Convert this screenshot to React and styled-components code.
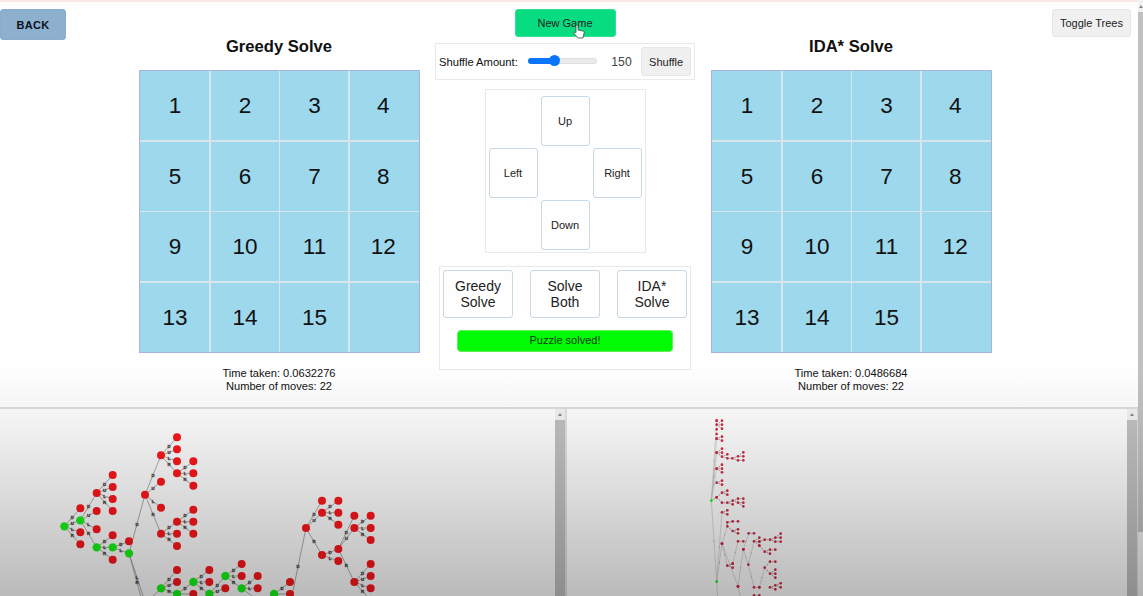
import React from "react";
import styled, { createGlobalStyle } from "styled-components";

const Global = createGlobalStyle`
  * { box-sizing: border-box; }
  body { margin: 0; background: #fff; font-family: "Liberation Sans", Arial, sans-serif; color: #111; overflow: hidden; }
  button { font-family: inherit; padding: 0; margin: 0; color: #222; }
`;

const Page = styled.div`
  position: relative;
  display: flex;
  width: 1143px;
  height: 596px;
  overflow: hidden;
  background: #fefefe;
`;
const Content = styled.div`
  width: 1138px;
  display: flex;
  flex-direction: column;
  border-top: 2px solid #fbe6e8;
`;
const Game = styled.main`
  height: 405px;
  display: grid;
  grid-template-columns: 139px 281px 291px 281px 1fr;
`;
const Side = styled.div`
  padding: 7px 7px 0 0;
  display: flex;
  align-items: flex-start;
  justify-content: ${(p) => p.$align || "flex-start"};
`;
const Button = styled.button`
  width: ${(p) => p.$w}px;
  height: ${(p) => p.$h}px;
  font-size: ${(p) => p.$size || 11}px;
  border: 1px solid ${(p) => p.$border || "#e6e6e6"};
  border-radius: 3px;
  background: ${(p) => p.$bg || "#f0f0f0"};
`;
const BackButton = styled(Button)`
  font-weight: 700;
  letter-spacing: 0.3px;
  color: #0b1220;
`;
const Outlined = styled(Button)`
  background: #fefefe;
  border-color: #c6d8e4;
  line-height: 16px;
`;

const BoardColumn = styled.section`
  display: flex;
  flex-direction: column;
  align-items: stretch;
`;
const Title = styled.h2`
  margin: 35px 1px 13px 0;
  font-size: 16.6px;
  line-height: 20px;
  text-align: center;
`;
const Board = styled.div`
  height: 283px;
  display: grid;
  grid-template-columns: 69px 68px 68px 1fr;
  grid-template-rows: repeat(4, 1fr);
  gap: 1.5px;
  border: 1px solid #a9b4dc;
  background: #d6e6ec;
`;
const Tile = styled.div`
  display: flex;
  align-items: center;
  justify-content: center;
  background: #9dd8ec;
  font-size: 22.5px;
  padding: 1px 0 0 1px;
  &:nth-child(4n) { padding-right: 3px; }
`;
const Stats = styled.div`
  margin: 14px 1px 0 0;
  font-size: 11.1px;
  line-height: 13px;
  text-align: center;
`;

const Controls = styled.section`
  display: flex;
  flex-direction: column;
  align-items: center;
  padding: 7px 1px 0 0;
`;
const ShufflePanel = styled.div`
  width: 260px;
  height: 37px;
  margin-top: 6px;
  padding: 0 3px 0 3px;
  display: flex;
  align-items: center;
  border: 1px solid #e9e9e9;
  font-size: 11.2px;
`;
const Label = styled.span`
  width: 80px;
  white-space: nowrap;
`;
const Track = styled.div`
  width: 70px;
  height: 6px;
  margin: 0 14px 2px 9px;
  border-radius: 3px;
  border: 1px solid #dedede;
  background: #ebebeb;
`;
const Fill = styled.div`
  width: 27px;
  height: 6px;
  margin: -1px;
  display: flex;
  align-items: center;
  justify-content: flex-end;
  border-radius: 3px;
  background: #0a75fb;
`;
const Knob = styled.div`
  flex: none;
  width: 11px;
  height: 11px;
  margin-right: -5px;
  border-radius: 50%;
  background: #0a75fb;
`;
const Amount = styled.span`
  width: 30px;
  font-size: 12.2px;
  color: #444;
`;
const Pad = styled.div`
  width: 161px;
  height: 164px;
  margin-top: 9px;
  padding-top: 3px;
  display: grid;
  grid-template-columns: repeat(3, 49px);
  grid-template-rows: repeat(3, 50px);
  gap: 2px 3px;
  place-content: center;
  border: 1px solid #e9e9e9;
  grid-template-areas: ". up ." "left . right" ". down .";
`;
const PadButton = styled(Outlined)`
  grid-area: ${(p) => p.$area};
`;
const SolvePanel = styled.div`
  width: 252px;
  height: 104px;
  margin-top: 13px;
  padding: 3px;
  border: 1px solid #e9e9e9;
  display: flex;
  flex-direction: column;
  align-items: center;
`;
const SolveRow = styled.div`
  width: 100%;
  display: flex;
  justify-content: space-between;
`;
const Solved = styled.div`
  width: 216px;
  height: 22px;
  margin-top: 12px;
  border-radius: 4px;
  background: #00fb04;
  border: 1px solid #5cf05c;
  font-size: 11px;
  line-height: 19px;
  text-align: center;
  color: #083a08;
`;

const Trees = styled.section`
  flex: 1;
  display: flex;
  border-top: 2px solid #dcdcdc;
`;
const TreePanel = styled.div`
  width: ${(p) => p.$w}px;
  display: flex;
  border-right: ${(p) => p.$edge}px solid #e0e0e0;
`;
const Drawing = styled.svg`
  display: block;
  flex: 1;
  min-width: 0;
  height: 187px;
`;
const Scrollbar = styled.div`
  width: ${(p) => p.$w}px;
  flex: none;
  display: flex;
  flex-direction: column;
  background: #f1f1f1;
`;
const Arrow = styled.div`
  height: 12px;
  display: flex;
  align-items: center;
  justify-content: center;
  &::after {
    content: "";
    border: 2.5px solid transparent;
    border-top: 0;
    border-bottom: 3px solid #888;
  }
`;
const Thumb = styled.div`
  height: ${(p) => p.$h};
  background: #c1c1c1;
`;
const Shade = styled.div`
  position: absolute;
  inset: 365px 0 0 0;
  pointer-events: none;
  background: linear-gradient(rgba(0, 0, 0, 0), rgba(0, 0, 0, 0.04) 22%, rgba(0, 0, 0, 0.265));
`;
const Cursor = styled.svg`
  position: absolute;
  left: 573px;
  top: 24px;
`;

// Nodes built with n() were explored, nodes built with g() lie on the solution path.
const n = (x, y, ...kids) => ({ x, y, kids });
const g = (x, y, ...kids) => ({ x, y, kids, found: true });

const greedy = g(73, 379,
  n(121, 325),
  g(121, 361,
    n(170, 279, n(218, 225), n(218, 261), n(218, 297), n(218, 333)),
    n(170, 333),
    n(170, 388),
    g(170, 442,
      n(218, 406),
      g(218, 442,
        n(267, 424),
        g(267, 460,
          n(315, 284,
            n(363, 166, n(411, 112), n(411, 148), n(411, 184), n(411, 220, n(460, 184), n(460, 220), n(460, 257))),
            n(363, 245),
            n(363, 323),
            n(363, 401, n(411, 365, n(460, 329), n(460, 365), n(460, 401)), n(411, 401), n(411, 438))
          ),
          n(315, 605),
          g(315, 634)
        )
      ),
      n(218, 479)
    )
  ),
  n(121, 397),
  n(121, 433)
);
const greedyPath = g(315, 612,
  g(363, 565,
    n(411, 510),
    n(411, 546),
    g(411, 582,
      g(460, 546, n(508, 510), n(508, 546), g(508, 582,
        g(556, 528, n(605, 492), n(605, 528), g(605, 565, n(653, 528), n(653, 565), n(653, 601))),
        n(556, 565))),
      n(460, 582)
    )
  )
);
const greedyTail = g(653, 610,
  g(702, 582, n(750, 546), n(750, 582))
);
const greedyBranch = n(750, 616,
  n(798, 384,
    n(846, 302),
    n(846, 338, n(895, 302), n(895, 338), n(895, 374)),
    n(846, 465,
      n(895, 447,
        n(943, 347),
        n(943, 384, n(992, 347), n(992, 384), n(992, 420)),
        n(943, 546, n(992, 492), n(992, 528), n(992, 565), n(992, 601))
      ),
      n(895, 483)
    )
  )
);

const ida = [
  n(80, 74, n(96, 62), n(96, 74), n(96, 86)),
  n(80, 62), n(80, 88), n(80, 102),
  n(80, 116, n(96, 110), n(96, 122)),
  n(80, 158, n(96, 146), n(96, 158), n(96, 170, n(112, 163), n(112, 175, n(127, 175, n(144, 169, n(160, 157), n(160, 169)), n(144, 181, n(160, 181)))))),
  n(80, 206, n(96, 194), n(96, 206), n(96, 217)),
  n(80, 248, n(96, 242), n(96, 254)),
  n(80, 292, n(96, 278, n(112, 272), n(112, 284)), n(96, 308, n(112, 308, n(128, 302, n(144, 296, n(160, 296)), n(144, 308, n(160, 308), n(160, 319))), n(128, 313)))),
  g(64, 302, n(80, 62), n(80, 116), n(80, 158), n(80, 206), n(80, 292), g(80, 545, n(96, 337, n(112, 331), n(112, 343)), n(96, 431, n(112, 379, n(112, 367, n(128, 364), n(144, 364)), n(128, 393, n(144, 388), n(144, 400)))), n(84, 610))),
  n(96, 431, n(112, 497, n(128, 491), n(128, 503))),
  n(96, 431, n(144, 559)),
  n(128, 491, n(144, 424, n(160, 424))),
  n(144, 559, n(160, 448)),
  n(160, 448, n(175, 494, n(192, 424, n(208, 413), n(208, 425), n(208, 437)), n(192, 562, n(208, 562)))),
  n(160, 448, n(176, 400, n(192, 400))),
  n(208, 425, n(224, 419, n(240, 419, n(256, 413, n(272, 401), n(272, 413)), n(256, 425, n(272, 425))))),
  n(208, 437, n(224, 455, n(240, 449, n(256, 449)), n(240, 461))),
  n(208, 562, n(224, 503, n(240, 485, n(256, 485)), n(240, 521, n(256, 509), n(256, 521), n(256, 533)))),
  n(240, 562, n(256, 556, n(272, 550), n(272, 562)), n(256, 568)),
  n(192, 586, n(208, 586)),
  n(144, 559, n(156, 610)),
];

const collect = (roots) => {
  const nodes = [];
  const edges = [];
  const walk = (node) => {
    nodes.push(node);
    node.kids.forEach((kid, i) => {
      const four = node.kids.length > 3;
      edges.push({ a: node, b: kid, move: (four ? "DULR" : kid.y < node.y ? "DUL" : "ULR")[i % (four ? 4 : 3)] });
      walk(kid);
    });
  };
  roots.forEach(walk);
  return { nodes, edges };
};

function Tree({ roots, r, viewBox, labels }) {
  const { nodes, edges } = collect(roots);
  return (
    <Drawing viewBox={viewBox} preserveAspectRatio="xMinYMin slice">
      {edges.map(({ a, b }, i) => (
        <line key={i} x1={a.x} y1={a.y} x2={b.x} y2={b.y} stroke={labels ? "#989898" : "#c2c2c2"} strokeWidth={labels ? 2.4 : 1.8} />
      ))}
      {edges.map(({ a, b, move }, i) => {
        const x = (a.x + b.x) / 2;
        const y = (a.y + b.y) / 2;
        if (y > 576) return null;
        return labels ? (
          <text key={i} x={x} y={y + 4.5} fontSize="13" fontWeight="700" textAnchor="middle" fill="#333" stroke="#555" strokeWidth="1">{move}</text>
        ) : (
          <circle key={i} cx={x} cy={y} r="1.8" fill="#aaa" />
        );
      })}
      {nodes.map((d, i) => (
        <circle key={i} cx={d.x} cy={d.y} r={d.found ? r * 1.04 : r} fill={d.found ? "#16f516" : labels ? "#fb171c" : "#d32a42"} />
      ))}
    </Drawing>
  );
}

function Puzzle({ title, time, moves }) {
  return (
    <BoardColumn>
      <Title>{title}</Title>
      <Board>
        {Array.from({ length: 16 }, (_, i) => (
          <Tile key={i}>{i < 15 ? i + 1 : ""}</Tile>
        ))}
      </Board>
      <Stats>
        <div>Time taken: {time}</div>
        <div>Number of moves: {moves}</div>
      </Stats>
    </BoardColumn>
  );
}

export default function App() {
  return (
    <Page>
      <Global />
      <Content>
        <Game>
          <Side>
            <BackButton $w={66} $h={31} $bg="#8eb0cf" $border="#8badcc">BACK</BackButton>
          </Side>
          <Puzzle title="Greedy Solve" time="0.0632276" moves={22} />
          <Controls>
            <Button $w={101} $h={28} $bg="#08dc80" $border="#2ce092">New Game</Button>
            <ShufflePanel>
              <Label>Shuffle Amount:</Label>
              <Track><Fill><Knob /></Fill></Track>
              <Amount>150</Amount>
              <Button $w={50} $h={29}>Shuffle</Button>
            </ShufflePanel>
            <Pad>
              <PadButton $area="up" $w={49} $h={50}>Up</PadButton>
              <PadButton $area="left" $w={49} $h={50}>Left</PadButton>
              <PadButton $area="right" $w={49} $h={50}>Right</PadButton>
              <PadButton $area="down" $w={49} $h={50}>Down</PadButton>
            </Pad>
            <SolvePanel>
              <SolveRow>
                <Outlined $w={70} $h={48} $size={14}>Greedy<br />Solve</Outlined>
                <Outlined $w={70} $h={48} $size={14}>Solve<br />Both</Outlined>
                <Outlined $w={70} $h={48} $size={14}>IDA*<br />Solve</Outlined>
              </SolveRow>
              <Solved>Puzzle solved!</Solved>
            </SolvePanel>
          </Controls>
          <Puzzle title="IDA* Solve" time="0.0486684" moves={22} />
          <Side $align="flex-end">
            <Button $w={79} $h={28}>Toggle Trees</Button>
          </Side>
        </Game>
        <Trees>
          <TreePanel $w={567} $edge={2}>
            <Tree roots={[greedy, greedyPath, greedyTail, greedyBranch]} r={12} viewBox="-120 27 1665 561" labels />
            <Scrollbar $w={10}><Arrow /><Thumb $h="100%" /></Scrollbar>
          </TreePanel>
          <TreePanel $w={571} $edge={1}>
            <Tree roots={ida} r={4} viewBox="-369 27 1680 561" />
            <Scrollbar $w={10}><Arrow /><Thumb $h="100%" /></Scrollbar>
          </TreePanel>
        </Trees>
      </Content>
      <Scrollbar $w={5}><Arrow /><Thumb $h="520px" /></Scrollbar>
      <Shade />
      <Cursor width="12" height="16" viewBox="0 0 12 16">
        <path d="M3 8V2.2C3 .7 5 .7 5 2.2V6l5 1c1 .3 1.3 1 1.1 2L10 14H5L1.3 9.7C.6 8.5 1.8 7.6 3 8.5Z" fill="#fff" stroke="#444" strokeWidth=".8" />
      </Cursor>
    </Page>
  );
}
